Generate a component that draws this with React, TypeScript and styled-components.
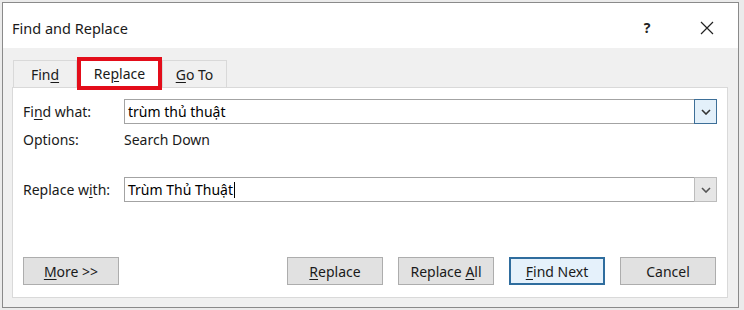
import * as React from "react";
import styled, { createGlobalStyle } from "styled-components";

const GlobalStyle = createGlobalStyle`
  html, body {
    margin: 0;
    padding: 0;
    background: #ebebeb;
  }
  body {
    padding: 2px;
    font-family: "Segoe UI", "Noto Sans", "Open Sans", sans-serif;
    font-size: 14px;
    color: #1a1a1a;
  }
`;

const Window = styled.div`
  width: 735px;
  height: 304px;
  border: 1px solid #8a8a8a;
  background: #f0f0f0;
  display: flex;
  flex-direction: column;
  box-sizing: content-box;
`;

const TitleBar = styled.div`
  box-sizing: border-box;
  height: 45px;
  background: #ffffff;
  display: flex;
  align-items: center;
  padding: 4px 0 0 9px;
  flex-shrink: 0;
`;

const Title = styled.div`
  flex: 1;
  font-size: 14.5px;
  color: #1a1a1a;
`;

const TitleButton = styled.div<{ $right: number }>`
  width: 40px;
  height: 40px;
  display: flex;
  align-items: center;
  justify-content: center;
  margin-right: ${(p) => p.$right}px;
  color: #222;
`;

const HelpMark = styled.span`
  font-size: 14px;
  font-weight: 700;
`;

const Body = styled.div`
  padding: 0 10px 9px 9px;
  display: flex;
  flex-direction: column;
`;

const TabRow = styled.div`
  margin-top: 9px;
  margin-bottom: -3px;
  height: 33px;
  padding-left: 1px;
  display: flex;
  align-items: flex-end;
`;

const Tab = styled.div<{ $active?: boolean; $width: number }>`
  box-sizing: border-box;
  width: ${(p) => p.$width}px;
  display: flex;
  align-items: center;
  justify-content: center;
  position: relative;
  font-size: 14px;
  color: #1a1a1a;
  ${(p) =>
    p.$active
      ? `
    height: 33px;
    background: #ffffff;
    border: 4px solid #e30d1a;
    z-index: 1;
  `
      : `
    height: 27px;
    margin-bottom: 3px;
    background: #f0f0f0;
    border: 1px solid #d9d9d9;
    border-bottom: none;
  `}
`;

const Key = styled.span`
  text-decoration: underline;
  text-underline-offset: 2px;
`;

const Panel = styled.div`
  box-sizing: border-box;
  height: 211px;
  background: #ffffff;
  border: 1px solid #d9d9d9;
  padding: 11px 10px 12px 10px;
  display: flex;
  flex-direction: column;
`;

const FieldRow = styled.div<{ $top?: number; $height: number }>`
  display: grid;
  grid-template-columns: 101px 1fr;
  align-items: center;
  height: ${(p) => p.$height}px;
  margin-top: ${(p) => p.$top ?? 0}px;
`;

const Label = styled.div`
  font-size: 14px;
  color: #1a1a1a;
`;

const Combo = styled.div`
  box-sizing: border-box;
  height: 25px;
  border: 1px solid #a3a3a3;
  display: flex;
  align-items: stretch;
`;

const ComboText = styled.div`
  flex: 1;
  display: flex;
  align-items: center;
  padding-left: 3px;
  font-size: 14px;
  color: #000;
`;

const Caret = styled.span`
  display: inline-block;
  width: 1px;
  height: 16px;
  background: #000;
  margin-left: 1px;
`;

const DropButton = styled.div<{ $focused?: boolean }>`
  box-sizing: border-box;
  width: 23px;
  margin: -1px -1px -1px 0;
  display: flex;
  align-items: center;
  justify-content: center;
  background: ${(p) => (p.$focused ? "#e3f0fa" : "#e6e6e6")};
  border: 1px solid ${(p) => (p.$focused ? "#3d6f98" : "#bcbcbc")};
`;

const ButtonRow = styled.div`
  margin-top: 55px;
  display: flex;
  align-items: center;
  justify-content: space-between;
`;

const ButtonGroup = styled.div`
  display: flex;
  gap: 15px;
  padding-right: 1px;
`;

const Button = styled.div<{ $default?: boolean }>`
  box-sizing: border-box;
  width: 96px;
  height: 28px;
  display: flex;
  align-items: center;
  justify-content: center;
  font-size: 14px;
  color: #1a1a1a;
  background: ${(p) => (p.$default ? "#e5f1fb" : "#e1e1e1")};
  border: ${(p) => (p.$default ? "2px solid #2f6d9e" : "1px solid #adadad")};
`;

const Chevron = ({ color }: { color: string }) => (
  <svg width="10" height="6" viewBox="0 0 10 6">
    <path d="M1 1 L5 5 L9 1" fill="none" stroke={color} strokeWidth="1.6" />
  </svg>
);

export default function App() {
  return (
    <>
      <GlobalStyle />
      <Window>
        <TitleBar>
          <Title>Find and Replace</Title>
          <TitleButton $right={20}>
            <HelpMark>?</HelpMark>
          </TitleButton>
          <TitleButton $right={11}>
            <svg width="14" height="14" viewBox="0 0 14 14">
              <path d="M1 1 L13 13 M13 1 L1 13" stroke="#222" strokeWidth="1.2" />
            </svg>
          </TitleButton>
        </TitleBar>
        <Body>
          <TabRow>
            <Tab $width={64}>
              Fin<Key>d</Key>
            </Tab>
            <Tab $active $width={85}>
              Re<Key>p</Key>lace
            </Tab>
            <Tab $width={65}>
              <Key>G</Key>o To
            </Tab>
          </TabRow>
          <Panel>
            <FieldRow $height={25}>
              <Label>
                Fi<Key>n</Key>d what:
              </Label>
              <Combo>
                <ComboText>trùm thủ thuật</ComboText>
                <DropButton $focused>
                  <Chevron color="#333" />
                </DropButton>
              </Combo>
            </FieldRow>
            <FieldRow $top={6} $height={16}>
              <Label>Options:</Label>
              <Label>Search Down</Label>
            </FieldRow>
            <FieldRow $top={31} $height={25}>
              <Label>
                Replace w<Key>i</Key>th:
              </Label>
              <Combo>
                <ComboText>
                  Trùm Thủ Thuật
                  <Caret />
                </ComboText>
                <DropButton>
                  <Chevron color="#555" />
                </DropButton>
              </Combo>
            </FieldRow>
            <ButtonRow>
              <Button>
                <span>
                  <Key>M</Key>ore &gt;&gt;
                </span>
              </Button>
              <ButtonGroup>
                <Button>
                  <span>
                    <Key>R</Key>eplace
                  </span>
                </Button>
                <Button>
                  <span>
                    Replace <Key>A</Key>ll
                  </span>
                </Button>
                <Button $default>
                  <span>
                    <Key>F</Key>ind Next
                  </span>
                </Button>
                <Button>Cancel</Button>
              </ButtonGroup>
            </ButtonRow>
          </Panel>
        </Body>
      </Window>
    </>
  );
}
